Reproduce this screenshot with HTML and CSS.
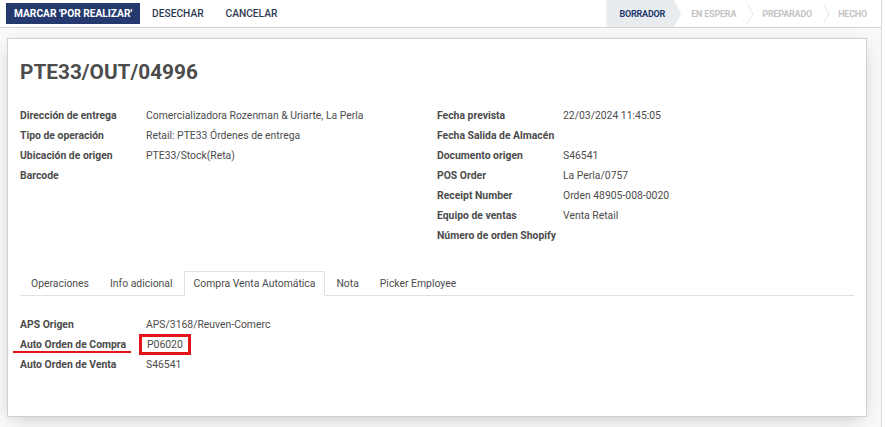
FILE: index.html
```html
<!DOCTYPE html>
<html lang="es">
  <head>
    <meta charset="UTF-8" />
    <title>PTE33/OUT/04996</title>
    <link rel="stylesheet" href="styles.css">
  </head>
  <body>
    <div class="mainArea">
      <div class="statusBar">
        <div class="actionButtons">
          <button class="btnPrimary">Marcar 'Por realizar'</button>
          <button class="btnLink">Desechar</button>
          <button class="btnLink">Cancelar</button>
        </div>
        <div class="stages">
          <span class="stage active">Borrador</span>
          <span class="stage next">En espera</span>
          <span class="stage">Preparado</span>
          <span class="stage last">Hecho</span>
        </div>
      </div>
      <div class="sheetWrap">
        <div class="sheet">
          <h1 class="title">PTE33/OUT/04996</h1>
          <div class="groups">
            <div class="group">
              <div class="row"><span class="label">Dirección de entrega</span><span class="value">Comercializadora Rozenman &amp; Uriarte, La Perla</span></div>
              <div class="row"><span class="label">Tipo de operación</span><span class="value">Retail: PTE33 Órdenes de entrega</span></div>
              <div class="row"><span class="label">Ubicación de origen</span><span class="value">PTE33/Stock(Reta)</span></div>
              <div class="row"><span class="label">Barcode</span><span class="value"></span></div>
            </div>
            <div class="group">
              <div class="row"><span class="label">Fecha prevista</span><span class="value">22/03/2024 11:45:05</span></div>
              <div class="row"><span class="label">Fecha Salida de Almacén</span><span class="value"></span></div>
              <div class="row"><span class="label">Documento origen</span><span class="value">S46541</span></div>
              <div class="row"><span class="label">POS Order</span><span class="value">La Perla/0757</span></div>
              <div class="row"><span class="label">Receipt Number</span><span class="value">Orden 48905-008-0020</span></div>
              <div class="row"><span class="label">Equipo de ventas</span><span class="value">Venta Retail</span></div>
              <div class="row"><span class="label">Número de orden Shopify</span><span class="value"></span></div>
            </div>
          </div>
          <ul class="tabs">
            <li>Operaciones</li>
            <li>Info adicional</li>
            <li class="active">Compra Venta Automática</li>
            <li>Nota</li>
            <li>Picker Employee</li>
          </ul>
          <div class="tabContent">
            <div class="row"><span class="label">APS Origen</span><span class="value">APS/3168/Reuven-Comerc</span></div>
            <div class="row"><span class="label marked">Auto Orden de Compra</span><span class="value"><span class="boxed">P06020</span></span></div>
            <div class="row"><span class="label">Auto Orden de Venta</span><span class="value">S46541</span></div>
          </div>
        </div>
      </div>
    </div>
  </body>
</html>
```
FILE: styles.css
```css
* {
  padding: 0;
  margin: 0;
  box-sizing: border-box;
}
body {
  font-family: Roboto, "Liberation Sans", sans-serif;
  font-size: 10.4px;
  color: #4c4c4c;
  background: #fff;
  width: 885px;
  height: 427px;
  overflow: hidden;
}
.mainArea {
  width: 882px;
  height: 427px;
  border-right: 1px solid #d8d8d8;
  background: #f9f9f9;
}
.statusBar {
  height: 28px;
  background: #fff;
  border-bottom: 1px solid #d4d4d4;
  display: flex;
  align-items: center;
  justify-content: space-between;
}
.actionButtons {
  display: flex;
  align-items: center;
  padding-left: 6px;
}
.actionButtons button {
  border: none;
  outline: none;
  font-family: Roboto, "Liberation Sans", sans-serif;
  font-size: 10.2px;
  font-weight: 500;
  text-transform: uppercase;
  height: 21px;
  cursor: pointer;
}
.btnPrimary {
  background: #243a6f;
  color: #fff;
  padding: 0 8px;
  font-weight: 700 !important;
}
.btnLink {
  background: none;
  color: #2d3b55;
  padding: 0 10px 0 12px;
}
.stages {
  display: flex;
  height: 27px;
  align-self: flex-start;
}
.stage {
  position: relative;
  display: flex;
  align-items: center;
  font-size: 9px;
  font-weight: 700;
  text-transform: uppercase;
  color: #c4c4c4;
  padding: 0 13px;
  letter-spacing: -0.2px;
}
.stage::after {
  content: "";
  position: absolute;
  right: -6px;
  top: 6px;
  width: 14px;
  height: 14px;
  border-top: 1px solid #e0e0e0;
  border-right: 1px solid #e0e0e0;
  transform: scaleX(0.55) rotate(45deg);
  z-index: 1;
}
.stage.active {
  color: #243a6f;
  background: #e9ecef;
  padding-left: 13px;
  padding-right: 16px;
  clip-path: polygon(0 0, calc(100% - 7px) 0, 100% 50%, calc(100% - 7px) 100%, 0 100%);
}
.stage.next {
  padding-left: 10px;
}
.stage.active::after,
.stage.last::after {
  display: none;
}
.stage.last {
  padding-right: 14px;
}
.sheetWrap {
  padding: 10px 14px 0 7px;
}
.sheet {
  background: #fff;
  border: 1px solid #d0d0d0;
  box-shadow: 0 5px 20px -6px rgba(0, 0, 0, 0.25);
  height: 379px;
  padding: 20px 12px 0 12px;
}
.title {
  font-size: 20.8px;
  font-weight: 700;
  color: #4c4c4c;
  line-height: 26px;
  margin-bottom: 20px;
}
.groups {
  display: grid;
  grid-template-columns: 417px 1fr;
}
.row {
  display: flex;
  align-items: center;
  height: 20px;
}
.label {
  width: 126px;
  flex-shrink: 0;
  font-weight: 700;
  color: #4c4c4c;
}
.value {
  color: #4c4c4c;
}
.tabs {
  list-style: none;
  display: flex;
  margin-top: 26px;
  border-bottom: 1px solid #dee2e6;
  padding-left: 1px;
  height: 25px;
}
.tabs li {
  display: flex;
  align-items: center;
  padding: 0 9px;
  margin-right: 1px;
  margin-bottom: -1px;
  border: 1px solid transparent;
  color: #4c4c4c;
}
.tabs li.active {
  border-color: #dee2e6 #dee2e6 #fff;
  background: #fff;
}
.tabContent {
  padding-top: 18px;
}
.marked {
  position: relative;
}
.marked::after {
  content: "";
  position: absolute;
  left: -7px;
  width: 118px;
  top: 13px;
  height: 2px;
  background: #e4141b;
}
.boxed {
  display: inline-block;
  margin-left: -7px;
  padding: 2px 5px 1px 5px;
  border: 3px solid #e4141b;
  line-height: 12px;
}
```
